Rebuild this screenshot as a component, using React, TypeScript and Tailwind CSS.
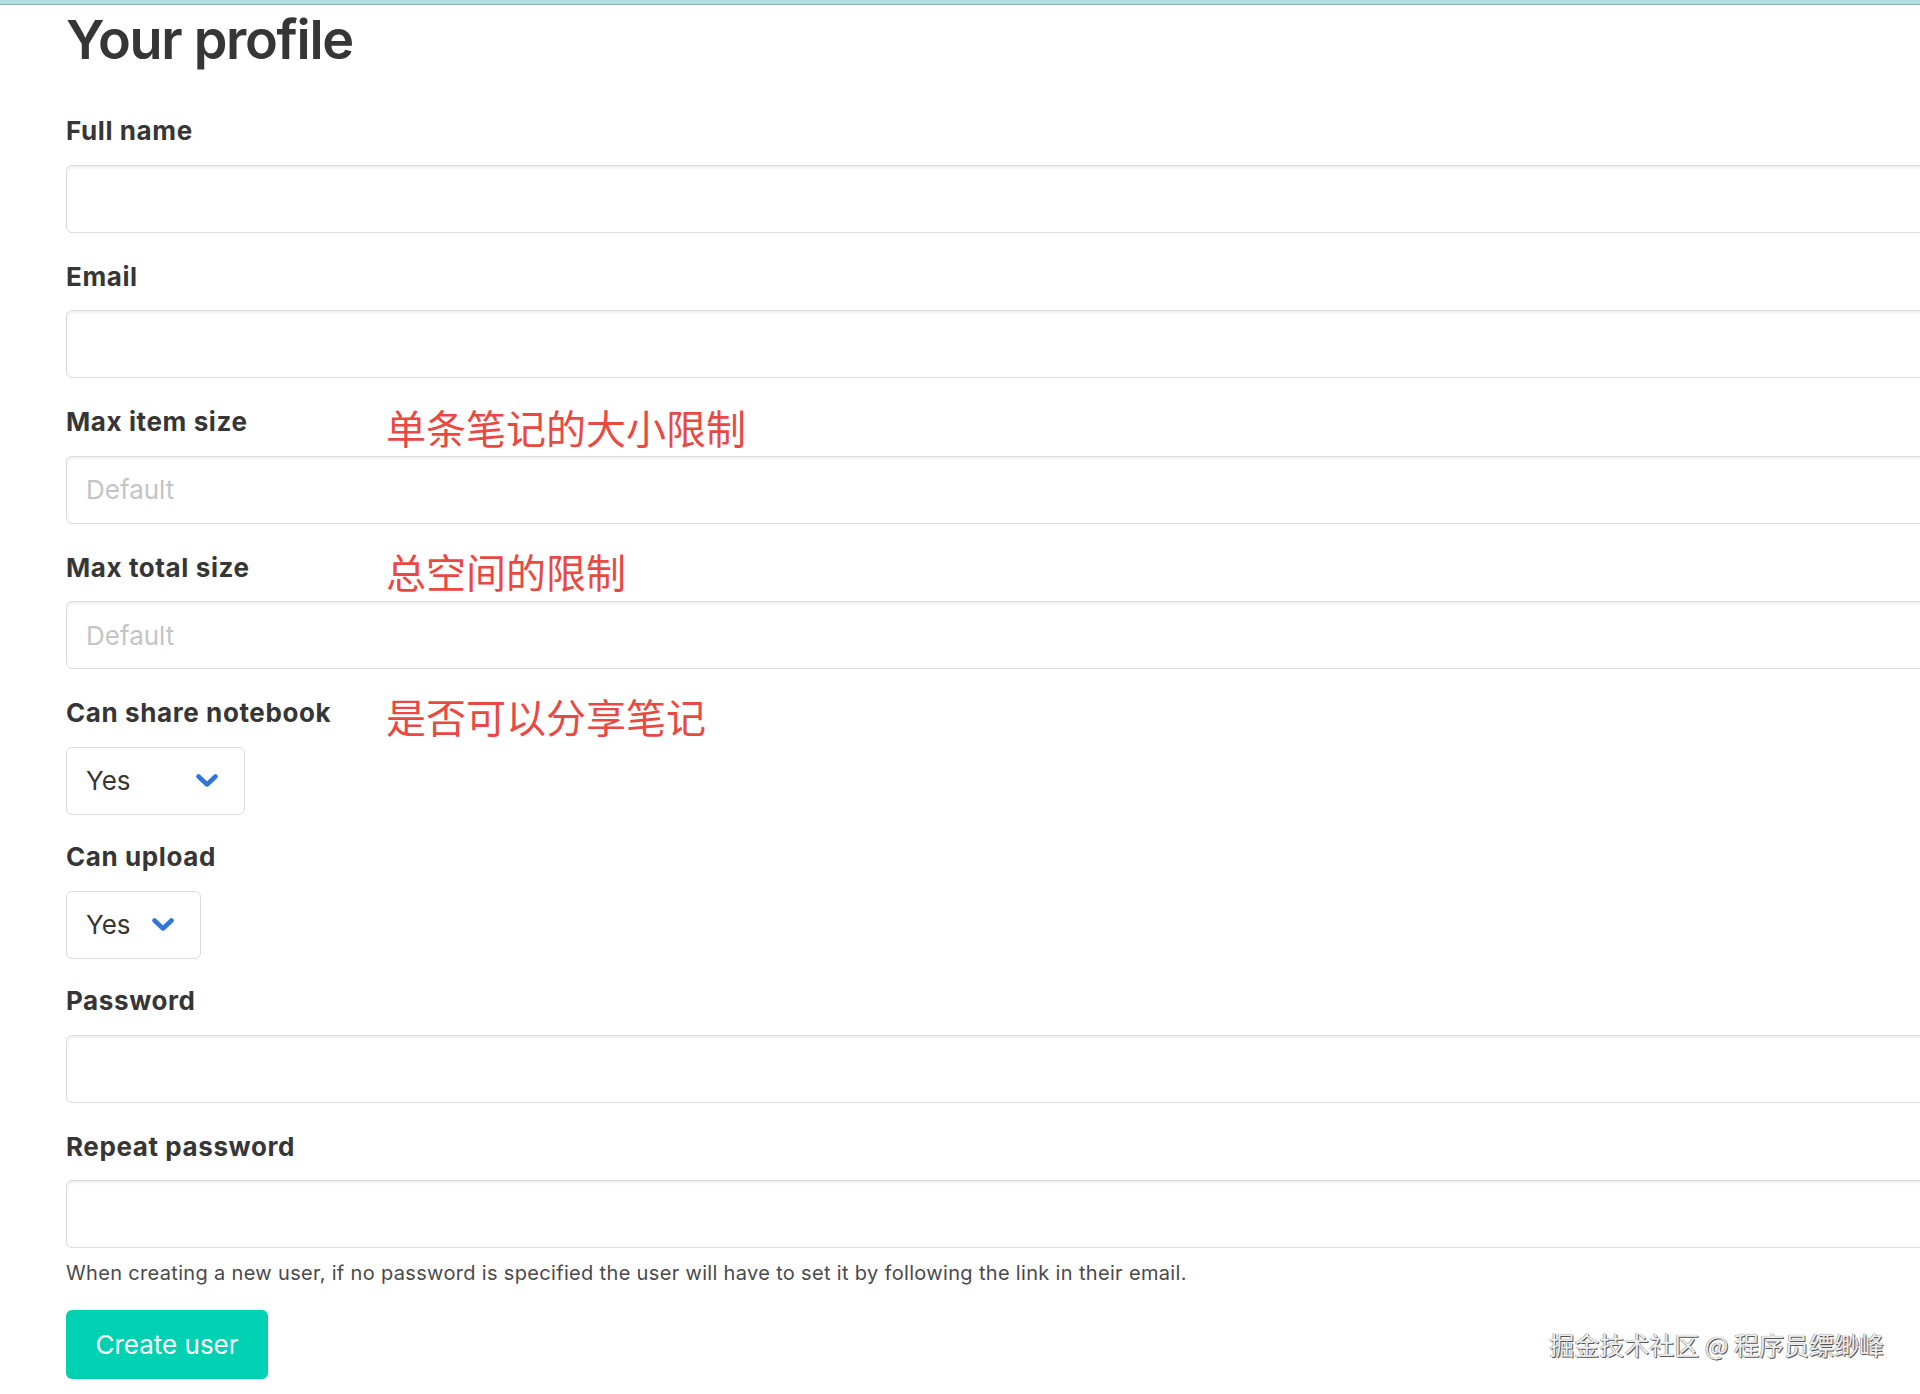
import React from "react";

function Chevron() {
  return (
    <svg width="22" height="13" viewBox="0 0 22 13" fill="none" aria-hidden="true">
      <polyline
        points="2.5,2.5 11,10.5 19.5,2.5"
        stroke="#3273dc"
        strokeWidth="4.5"
        strokeLinecap="round"
        strokeLinejoin="round"
      />
    </svg>
  );
}

function Label({ text, note, noteTop }: { text: string; note?: string; noteTop?: string }) {
  return (
    <div className="relative h-[40px] mb-[13.5px]">
      <label className="block text-[26px] leading-[40px] font-bold tracking-[0.6px] text-[#363636]">{text}</label>
      {note ? (
        <span
          className={
            "absolute left-[320px] whitespace-nowrap text-[40px] leading-[40px] font-normal text-[#e84a43] font-['Noto_Sans_CJK_SC','Noto_Sans',sans-serif] " +
            (noteTop ?? "top-[5px]")
          }
        >
          {note}
        </span>
      ) : null}
    </div>
  );
}

function TextField({
  label,
  placeholder,
  type,
  note,
  noteTop,
  className,
}: {
  label: string;
  placeholder?: string;
  type?: string;
  note?: string;
  noteTop?: string;
  className?: string;
}) {
  return (
    <div className={className ?? "mb-[24px]"}>
      <Label text={label} note={note} noteTop={noteTop} />
      <input
        type={type ?? "text"}
        placeholder={placeholder}
        className="block w-[1880px] h-[68px] rounded-[6px] border border-[#dbdbdb] bg-white pl-[19px] text-[26px] text-[#363636] shadow-[inset_0_2px_3px_rgba(10,10,10,0.07)] outline-none placeholder:text-[#c4c4c4]"
      />
    </div>
  );
}

function SelectField({
  label,
  widthClass,
  note,
  noteTop,
}: {
  label: string;
  widthClass: string;
  note?: string;
  noteTop?: string;
}) {
  return (
    <div className="mb-[22.5px]">
      <Label text={label} note={note} noteTop={noteTop} />
      <div
        className={
          "flex h-[68px] items-center rounded-[6px] border border-[#dbdbdb] bg-white pl-[19px] pr-[26px] " +
          widthClass
        }
      >
        <span className="text-[26px] leading-none text-[#363636]">Yes</span>
        <span className="ml-auto flex items-center">
          <Chevron />
        </span>
      </div>
    </div>
  );
}

export default function App() {
  return (
    <div className="relative min-h-[1394px] w-full overflow-hidden bg-white font-['Inter','Noto_Sans_CJK_SC',sans-serif] text-[#363636]">
      <div className="h-[5px] border-b border-[#8fb0b2] bg-[#b0dfe3]" />
      <div className="pl-[66px]">
        <h1 className="pt-[8px] text-[54px] leading-[54px] font-semibold tracking-[-1.3px] text-[#363636]">Your profile</h1>
        <div className="mt-[44px]">
          <TextField label="Full name" />
          <TextField label="Email" type="email" />
          <TextField label="Max item size" placeholder="Default" note="单条笔记的大小限制" noteTop="top-[5px]" />
          <TextField label="Max total size" placeholder="Default" note="总空间的限制" noteTop="top-[3px]" />
          <SelectField label="Can share notebook" widthClass="w-[179px]" note="是否可以分享笔记" noteTop="top-[3px]" />
          <SelectField label="Can upload" widthClass="w-[135px]" />
          <TextField label="Password" type="password" />
          <TextField label="Repeat password" type="password" className="mb-0" />
          <p className="mt-[9.5px] text-[20px] leading-[30px] tracking-[0.33px] text-[#4a4a4a]">
            When creating a new user, if no password is specified the user will have to set it by following the link in their email.
          </p>
          <button
            type="button"
            className="mt-[22.5px] flex h-[69px] w-[202px] items-center justify-center rounded-[6px] bg-[#00d1b2] text-[26px] text-white"
          >
            Create user
          </button>
        </div>
      </div>
      <div className="absolute right-[36px] top-[1330px] whitespace-nowrap text-[25px] leading-[28px] text-[#eeeeee] font-['Noto_Sans_CJK_SC',sans-serif] [text-shadow:1px_1px_0_#555,-0.5px_-0.5px_0_#999,0_0_1px_#777]">
        掘金技术社区 @ 程序员缥缈峰
      </div>
    </div>
  );
}
